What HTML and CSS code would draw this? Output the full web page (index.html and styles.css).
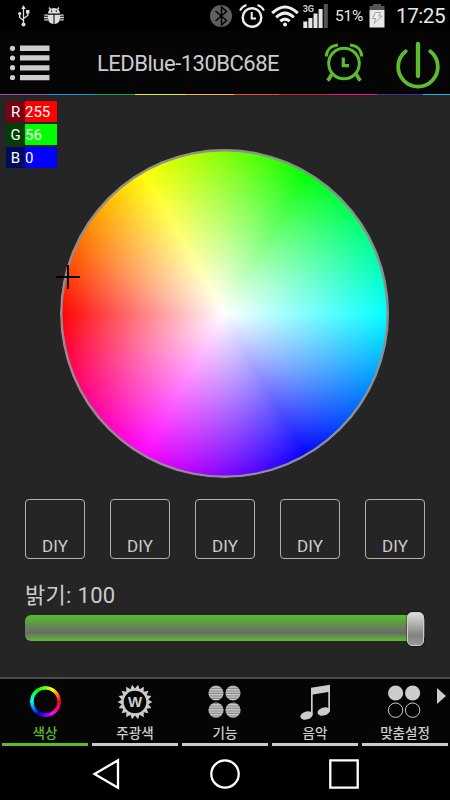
FILE: index.html
```
<!DOCTYPE html>
<html lang="ko">
<head>
    <meta charset="UTF-8">
    <meta name="viewport" content="width=device-width, initial-scale=1.0">
    <title>LEDBlue</title>
    <link rel="stylesheet" href="styles.css">
</head>
<body>

    <!-- System status bar -->
    <div class="status-bar">
        <svg class="usb" width="12" height="22" viewBox="0 0 12 22" fill="none" stroke="#ddd" stroke-width="1.3">
            <path d="M5.5 3v15M5.5 15.500L1.700 12.500V9M5.500 13.500L9.800 10.500V7"/>
            <g fill="#ddd" stroke="none">
                <path d="M5.500 0L7.700 4H3.300z"/>
                <circle cx="5.500" cy="19.500" r="2"/>
                <circle cx="1.700" cy="8.500" r="1.600"/>
                <path d="M8 5h3.500v3.500H8z"/>
            </g>
        </svg>
        <svg class="bug" width="20" height="18" viewBox="0 0 20 18">
            <path d="M4 6.500a6 5.500 0 0 1 12 0zM4 7.700h5.500V17A6 6 0 0 1 4 11.500zM10.500 7.700H16v3.800A6 6 0 0 1 10.500 17z" fill="#ddd"/>
            <path d="M6.500 2.500L5 .5M13.500 2.500L15 .5M4 8.200H.3M4 10.500H0M4 12.800H.3M16 8.200h3.700M16 10.500h4M16 12.800h3.700" stroke="#ddd" stroke-width="1.300"/>
            <path d="M7 4.200h1.300M11.700 4.200H13" stroke="#000" stroke-width="1.300"/>
        </svg>
        <svg class="bluetooth" width="22" height="22" viewBox="0 0 22 22">
            <circle cx="11" cy="11" r="11" fill="#5f5f5f"/>
            <path d="M5.500 6l11 9.500-5 4.500V2l5 4.500-11 9.500" fill="none" stroke="#000" stroke-width="1.500"/>
        </svg>
        <svg class="alarm" width="26" height="24" viewBox="0 0 26 24" fill="none" stroke="#eee">
            <circle cx="13" cy="13.500" r="9.300" stroke-width="2.400"/>
            <path d="M12.700 8v6.500H17" stroke-width="2"/>
            <path d="M1 6.500Q3 2.500 7.500 1M25 6.500Q23 2.500 18.500 1" stroke-width="1.900"/>
        </svg>
        <svg class="wifi" width="28" height="22" viewBox="0 0 28 22" fill="none" stroke="#eee" stroke-width="3">
            <path d="M1.200 8.200Q14-4.200 26.800 8.200M5.200 12.300Q14 3.800 22.800 12.300M9.300 16.200Q14 12 18.700 16.200"/>
            <circle cx="14" cy="19.500" r="2" fill="#eee" stroke="none"/>
        </svg>
        <svg class="signal" width="26" height="24" viewBox="0 0 26 24">
            <path d="M.3 17.500h4V24h-4zM5.400 14h4v10h-4zM10.500 9.500h4V24h-4zM15.600 5h4v19h-4z" fill="#e6e6e6"/>
            <path d="M20.800 0h4v24h-4z" fill="#555"/>
            <text x="-.3" y="7.800" class="signal-text">3G</text>
        </svg>
        <span class="percent">51%</span>
        <svg class="battery" width="16" height="24" viewBox="0 0 16 24">
            <path d="M4 0h8v2h3.500v4H.5V2H4z" fill="#555"/>
            <path d="M.5 6h15v17.500H.5z" fill="#e6e6e6"/>
            <path d="M6.500 8.500h5l-2 3.500H13L5 19.500l2-5H3.500z" fill="#eee" stroke="#999" stroke-width=".9"/>
        </svg>
        <span class="time">17:25</span>
    </div>

    <!-- App header -->
    <div class="header">
        <svg class="menu" width="42" height="36" viewBox="0 0 42 36" fill="#ccc">
            <circle cx="3.500" cy="3.300" r="2.600"/>
            <circle cx="3.500" cy="13" r="2.600"/>
            <circle cx="3.500" cy="22.700" r="2.600"/>
            <circle cx="3.500" cy="32.500" r="2.600"/>
            <path d="M11 .5h29.500V6H11zM11 10.300h29.500v5.300H11zM11 20.200h29.500v5.200H11zM11 30h29.500v5.300H11z"/>
        </svg>
        <h1>LEDBlue-130BC68E</h1>
        <svg class="timer" width="40" height="40" viewBox="0 0 40 40" fill="none" stroke="#5cbb2f">
            <circle cx="20" cy="20.500" r="15.300" stroke-width="3"/>
            <path d="M19.300 14.500v8.200H25" stroke-width="3.200"/>
            <path d="M2.300 13.500C2.500 7 7 2.500 14 2M37.700 13.500C37.500 7 33 2.500 26 2" stroke-width="3"/>
            <path d="M8 31l-4.200 6.800M32 31l4.200 6.800" stroke-width="3.600"/>
        </svg>
        <svg class="power" width="44" height="48" viewBox="0 0 44 48" fill="none" stroke="#5cbb2f" stroke-linecap="round">
            <path d="M9.700 10.300a19.800 19.800 0 1 0 24.600 0" stroke-width="3.800"/>
            <path d="M22 3v32" stroke-width="4.300"/>
        </svg>
    </div>
    <div class="rainbow"></div>

    <!-- Color picker -->
    <div class="content">
        <div class="rgb">
            <div class="rgb-row red"><span>R</span><b>255</b></div>
            <div class="rgb-row green"><span>G</span><b>56</b></div>
            <div class="rgb-row blue"><span>B</span><b>0</b></div>
        </div>

        <div class="wheel">
            <div class="cross"></div>
        </div>

        <div class="presets">
            <button>DIY</button>
            <button>DIY</button>
            <button>DIY</button>
            <button>DIY</button>
            <button>DIY</button>
        </div>

        <div class="brightness">밝기: 100</div>
        <div class="slider">
            <div class="thumb"></div>
        </div>
    </div>

    <!-- Tabs -->
    <div class="tabs">
        <div class="tab active">
            <div class="ring"></div>
            <span>색상</span>
        </div>
        <div class="tab">
            <svg width="36" height="36" viewBox="-18 -18 36 36">
                <polygon fill="#ccc" points="17.5,0 13.3,2.3 16.4,6 11.7,6.8 13.4,11.2 8.7,10.3 8.8,15.2 4.6,12.7 3,17.2 0,13.5 -3,17.2 -4.6,12.7 -8.8,15.2 -8.7,10.3 -13.4,11.2 -11.7,6.8 -16.4,6 -13.3,2.3 -17.5,0 -13.3,-2.3 -16.4,-6 -11.7,-6.8 -13.4,-11.2 -8.7,-10.3 -8.8,-15.2 -4.6,-12.7 -3,-17.2 0,-13.5 3,-17.2 4.6,-12.7 8.8,-15.2 8.7,-10.3 13.4,-11.2 11.7,-6.8 16.4,-6 13.3,-2.3"/>
                <circle r="11.300" fill="#050505"/>
                <text y="5.300" class="gear-text">W</text>
            </svg>
            <span>주광색</span>
        </div>
        <div class="tab">
            <svg width="36" height="36" viewBox="0 0 36 36">
                <defs>
                    <pattern id="lines" width="4" height="2.5" patternUnits="userSpaceOnUse">
                        <path d="M0 0h4v2.500H0z" fill="#888"/>
                        <path d="M0 0h4v1.300H0z" fill="#ccc"/>
                    </pattern>
                </defs>
                <g fill="url(#lines)">
                    <circle cx="9" cy="9" r="7.600"/>
                    <circle cx="26" cy="9" r="7.600"/>
                    <circle cx="9" cy="26.200" r="7.600"/>
                    <circle cx="26" cy="26.200" r="7.600"/>
                </g>
            </svg>
            <span>기능</span>
        </div>
        <div class="tab">
            <svg width="36" height="36" viewBox="0 0 36 36" fill="#ccc">
                <path d="M14 3.800L33 .8v27h-1.700V8L15.700 10.500v20H14z"/>
                <ellipse cx="9.500" cy="31.500" rx="6.300" ry="4" transform="rotate(-15 9.500 31.500)"/>
                <ellipse cx="26.700" cy="27.500" rx="6.300" ry="4" transform="rotate(-15 26.700 27.500)"/>
            </svg>
            <span>음악</span>
        </div>
        <div class="tab">
            <svg class="custom" width="36" height="36" viewBox="0 0 36 36" fill="#ccc">
                <circle cx="9.600" cy="9" r="7.600"/>
                <circle cx="26.600" cy="9" r="7.600"/>
                <g fill="none" stroke="#ccc">
                    <circle cx="9.600" cy="26.200" r="7.200"/>
                    <circle cx="26.600" cy="26.200" r="7.200"/>
                </g>
            </svg>
            <span>맞춤설정</span>
            <i class="more"></i>
        </div>
    </div>

    <!-- Android navigation -->
    <div class="nav">
        <svg width="32" height="32" viewBox="0 0 32 32"><path d="M4.500 16L28 2.300v27.400z"/></svg>
        <svg width="32" height="32" viewBox="0 0 32 32"><circle cx="16" cy="16" r="13.700"/></svg>
        <svg width="32" height="32" viewBox="0 0 32 32"><path d="M2.300 2.300h27.400v27.400H2.300z"/></svg>
    </div>

</body>
</html>
```
FILE: styles.css
```
* {
    box-sizing: border-box;
    margin: 0;
    padding: 0;
}

body {
    width: 450px;
    height: 800px;
    overflow: hidden;
    display: flex;
    flex-direction: column;
    background-color: #000;
    color: #ccc;
    font-family: Roboto, 'Noto Sans CJK KR', sans-serif;
}

svg {
    display: block;
    flex: none;
}

/* status bar */
.status-bar {
    height: 31px;
    display: flex;
    align-items: center;
    padding-left: 18px;
    color: #e6e6e6;
}

.bug {
    margin-left: 14px;
}

.bluetooth {
    margin-left: 146px;
}

.alarm {
    margin-left: 7px;
}

.wifi {
    margin-left: 6px;
}

.signal {
    margin-left: 4px;
}

.signal-text {
    font-size: 9px;
    font-weight: bold;
    fill: #ccc;
}

.percent {
    width: 30px;
    margin-left: 6px;
    font-size: 15.5px;
    letter-spacing: -0.2px;
}

.battery {
    margin-left: 4px;
}

.time {
    margin-left: 11px;
    font-size: 20.7px;
    letter-spacing: -0.5px;
}

/* header */
.header {
    height: 63px;
    display: flex;
    align-items: center;
    padding-left: 9px;
    background-color: #050505;
}

h1 {
    width: 183px;
    margin: 1px 0 0 46px;
    font-size: 22px;
    font-weight: normal;
    letter-spacing: -0.5px;
    white-space: nowrap;
}

.timer {
    margin-left: 44px;
}

.power {
    margin-left: 32px;
    margin-top: 4px;
}

.rainbow {
    height: 2px;
    border-bottom: 1px solid #222;
    background: linear-gradient(to right, #9a4cbc 46px, #109be0 46px 95px, #10a845 95px 135px, #e6ee2e 135px 186px, #ffb040 186px 234px, #f54632 234px 279px, #d0202e 279px 329px, #f01496 329px 377px, #4034a4 377px 423px, #2fb2ee 423px);
}

/* color picker */
.content {
    height: 581px;
    padding: 5px 25px 0;
    background-color: #252525;
}

.rgb {
    width: 51px;
    height: 67px;
    margin-left: -19px;
    display: flex;
    flex-direction: column;
    gap: 2px;
}

.rgb-row {
    height: 21px;
    display: flex;
    line-height: 22px;
    font-size: 15px;
    color: #fff;
}

.rgb-row span {
    width: 19px;
    text-align: center;
}

.rgb-row b {
    width: 32px;
    font-weight: normal;
}

.red span {
    background-color: #780010;
}

.red b {
    background-color: #f00;
}

.green span {
    background-color: #003f00;
}

.green b {
    background-color: #0f0;
}

.blue span {
    background-color: #000a5c;
}

.blue b {
    background-color: #00f;
}

.wheel {
    position: relative;
    width: 329px;
    height: 329px;
    margin: -19px 0 0 35px;
    border-radius: 50%;
    background: radial-gradient(closest-side, #fff, rgba(255, 255, 255, 0)),
        conic-gradient(from 270deg, #f00, #ff0, #0f0, #0ff, #00f, #f0f, #f00);
    box-shadow: inset 0 0 0 2.5px #8f8f8f;
}

/* marker of the picked color */
.cross {
    position: absolute;
    left: -4px;
    top: 116px;
    width: 24px;
    height: 24px;
    background: linear-gradient(#000, #000) center / 24px 2px no-repeat,
        linear-gradient(#000, #000) center / 2px 24px no-repeat;
}

.presets {
    display: flex;
    justify-content: space-between;
    margin-top: 21px;
}

.presets button {
    width: 60px;
    height: 60px;
    padding-top: 33px;
    border: 1px solid #b0b0b0;
    border-radius: 4px;
    background: none;
    font-family: inherit;
    font-size: 17px;
    color: #ccc;
}

.brightness {
    height: 32px;
    margin-top: 21px;
    font-size: 22px;
    line-height: 32px;
    letter-spacing: 0.3px;
}

.slider {
    position: relative;
    height: 26px;
    margin-top: 3px;
    border-radius: 6px;
    background: linear-gradient(#59b82d 5%, #6b6b6b 68%, #59b82d 97%);
}

.thumb {
    position: absolute;
    right: 1px;
    top: -3px;
    width: 17px;
    height: 34px;
    border: 1px solid #ccc;
    border-radius: 5px;
    background: linear-gradient(#ddd, #828282 70%, #999);
    box-shadow: 0 0 2px #000;
}

/* tabs */
.tabs {
    height: 71px;
    display: flex;
    border-top: 2px solid #4d4d4d;
    background-color: #050505;
}

.tab {
    position: relative;
    width: 90px;
    height: 69px;
    padding-top: 5px;
    display: flex;
    flex-direction: column;
    align-items: center;
    font-size: 13.5px;
    font-weight: 500;
}

.tab span {
    height: 20px;
    margin-top: 3px;
    line-height: 20px;
    white-space: nowrap;
}

.tab::after {
    content: '';
    width: 86px;
    height: 3px;
    background-color: #ccc;
}

.active {
    color: #5cbb2f;
}

.active::after {
    background-color: #5cbb2f;
}

.ring {
    width: 31px;
    height: 31px;
    margin: 2px 0 3px;
    border-radius: 50%;
    background: conic-gradient(from 90deg, #f00, #f0f, #00f, #0ff, #0f0, #ff0, #f00);
    -webkit-mask: radial-gradient(circle, transparent 11.5px, #000 12.2px);
    mask: radial-gradient(circle, transparent 11.5px, #000 12.2px);
}

.custom {
    margin-right: 2px;
}

.gear-text {
    font-family: 'Liberation Sans', sans-serif;
    font-size: 15px;
    font-weight: 700;
    text-anchor: middle;
    fill: #ccc;
}

.more {
    position: absolute;
    top: 9px;
    left: 77px;
    border-left: 9px solid #ccc;
    border-top: 8px solid transparent;
    border-bottom: 8px solid transparent;
}

/* navigation */
.nav {
    flex: 1;
    display: flex;
    justify-content: center;
    align-items: center;
    gap: 87px;
}

.nav svg {
    fill: none;
    stroke: #fff;
    stroke-width: 2.3;
}
```
